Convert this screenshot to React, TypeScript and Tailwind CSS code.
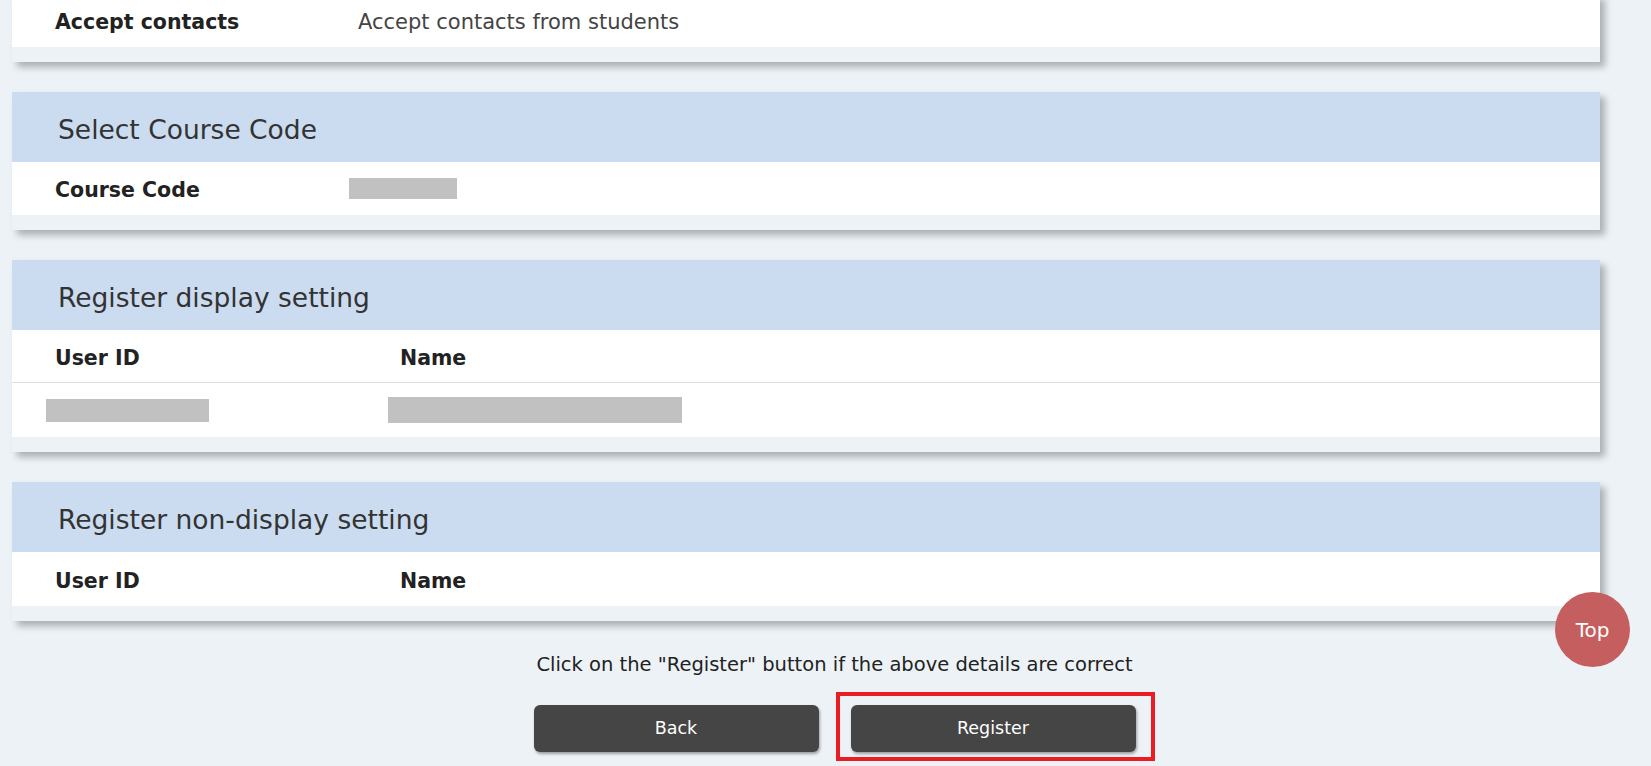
import type { ReactNode } from "react";

const font = { fontFamily: '"DejaVu Sans", Verdana, sans-serif' };

const Card = ({ title, children }: { title?: string; children: ReactNode }) => {
  return (
    <section className="w-[1588px] bg-[#edf2f7] pb-[15px] shadow-[5px_5px_7px_rgba(0,0,0,0.28)]">
      {title && (
        <h2 className="flex h-[70px] items-center bg-[#cbdcf0] pl-[46px] pt-[5px] text-[26.5px] text-[#333]">
          {title}
        </h2>
      )}
      <div className="bg-white">{children}</div>
    </section>
  );
};

const Redacted = ({ className }: { className: string }) => (
  <span className={`block bg-[#c1c1c1] ${className}`} />
);

const App = () => {
  return (
    <div style={font} className="relative min-h-screen overflow-hidden bg-[#edf2f7] text-[#222]">
      <div className="-mt-[6px] flex flex-col gap-[30px] pl-[12px]">
        <Card>
          <div className="flex h-[53px] items-center pt-[4px] text-[21px]">
            <div className="w-[346px] pl-[43px] text-[20.5px] font-bold">Accept contacts</div>
            <div className="text-[#444]">Accept contacts from students</div>
          </div>
        </Card>

        <Card title="Select Course Code">
          <div className="flex h-[53px] items-center">
            <div className="w-[337px] pl-[43px] pt-[4px] text-[20.5px] font-bold">Course Code</div>
            <Redacted className="h-[21px] w-[108px]" />
          </div>
        </Card>

        <Card title="Register display setting">
          <div className="flex h-[53px] items-center border-b border-[#dcdcdc] pt-[4px] text-[20.5px] font-bold">
            <div className="w-[388px] pl-[43px]">User ID</div>
            <div>Name</div>
          </div>
          <div className="flex h-[54px] items-center">
            <div className="w-[376px] pl-[34px]">
              <Redacted className="h-[23px] w-[163px]" />
            </div>
            <Redacted className="h-[26px] w-[294px]" />
          </div>
        </Card>

        <Card title="Register non-display setting">
          <div className="flex h-[54px] items-center pt-[4px] text-[20.5px] font-bold">
            <div className="w-[388px] pl-[43px]">User ID</div>
            <div>Name</div>
          </div>
        </Card>
      </div>

      <div className="flex flex-col items-center pl-[18px] pt-[32px]">
        <p className="text-[19.5px] leading-[24px] text-[#222]">
          Click on the "Register" button if the above details are correct
        </p>
        <div className="mt-[28px] flex gap-[32px]">
          <button className="h-[47px] w-[285px] rounded-[6px] bg-[#454545] text-[17.5px] text-white shadow-[1px_2px_3px_rgba(0,0,0,0.35)]">
            Back
          </button>
          <div className="relative">
            <span className="absolute -bottom-[9px] -left-[15px] -right-[19px] -top-[13px] border-[4px] border-[#ec1c24]" />
            <button className="relative h-[47px] w-[285px] rounded-[6px] bg-[#454545] text-[17.5px] text-white shadow-[1px_2px_3px_rgba(0,0,0,0.35)]">
              Register
            </button>
          </div>
        </div>
      </div>

      <button className="absolute bottom-[99px] right-[21px] flex h-[75px] w-[75px] items-center justify-center rounded-full bg-[#c55e5e] text-[20px] text-white">
        Top
      </button>
    </div>
  );
};

export default App;
